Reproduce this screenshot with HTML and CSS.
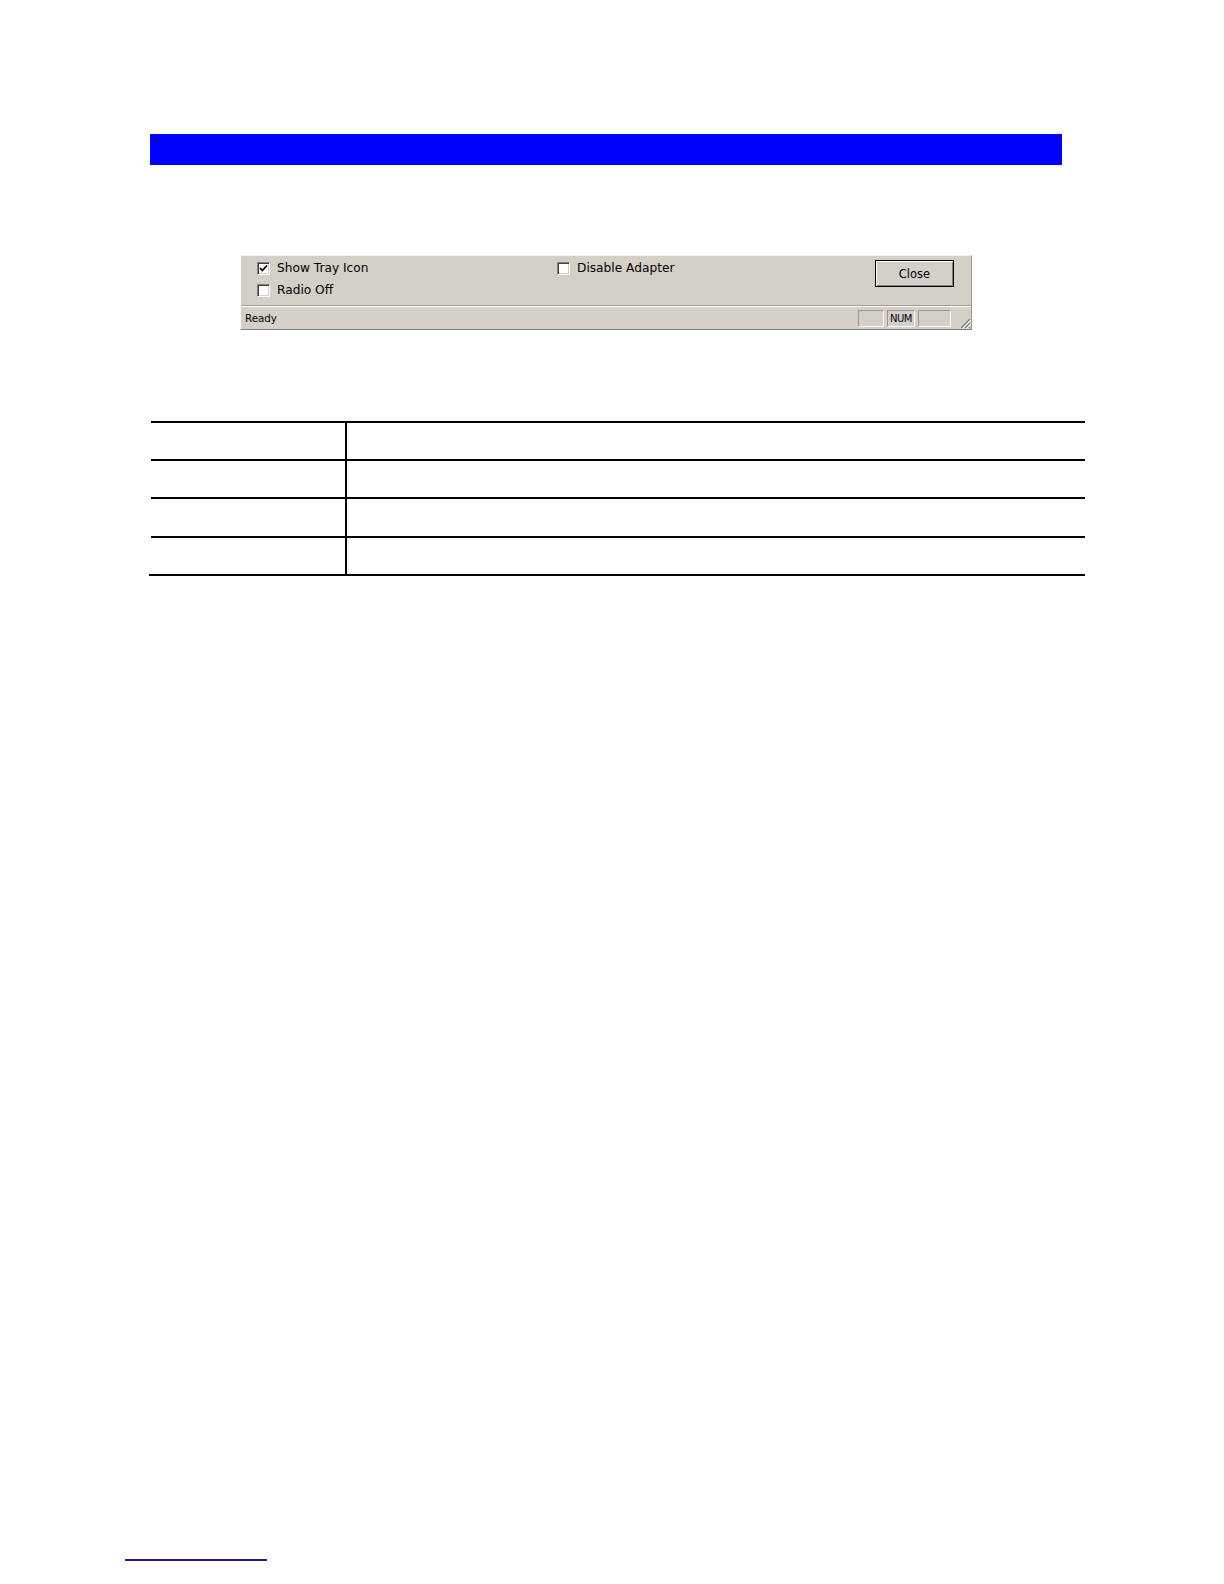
FILE: index.html
```html
<!DOCTYPE html>
<html>
<head>
<meta charset="utf-8">
<link rel="stylesheet" href="styles.css">
</head>
<body>
<div class="page">
  <div class="banner"></div>

  <div class="dialog">
    <div class="opts">
      <div class="col col1">
        <label class="chk"><span class="box"><svg width="9" height="9" viewBox="0 0 9 9"><polyline points="1,4 3.3,6.5 8,1.5" fill="none" stroke="#000" stroke-width="1.8"/></svg></span>Show Tray Icon</label>
        <label class="chk"><span class="box"></span>Radio Off</label>
      </div>
      <div class="col col2">
        <label class="chk"><span class="box"></span>Disable Adapter</label>
      </div>
      <div class="col col3">
        <button class="btn">Close</button>
      </div>
    </div>
    <div class="status">
      <span class="ready">Ready</span>
      <span class="pane p1"></span>
      <span class="pane p2">NUM</span>
      <span class="pane p3"></span>
      <span class="grip"><svg width="12" height="12" viewBox="0 0 12 12"><path d="M11 2 L2 11 M11 6 L6 11 M11 10 L10 11" stroke="#808080" stroke-width="1.2" fill="none"/><path d="M12 3 L3 12 M12 7 L7 12" stroke="#fff" stroke-width="1" fill="none"/></svg></span>
    </div>
  </div>

  <div class="table">
    <div class="row"><div class="c1"></div><div class="c2"></div></div>
    <div class="row"><div class="c1"></div><div class="c2"></div></div>
    <div class="row"><div class="c1"></div><div class="c2"></div></div>
    <div class="row"><div class="c1"></div><div class="c2"></div></div>
  </div>

  <div class="footer"><span class="link"></span></div>
</div>
</body>
</html>
```

FILE: styles.css
```css
html, body {
  margin: 0;
  padding: 0;
  background: #ffffff;
}

.page {
  width: 1224px;
  height: 1584px;
  padding-top: 134px;
  box-sizing: border-box;
  font-family: "DejaVu Sans", Verdana, sans-serif;
}

.banner {
  margin-left: 150px;
  width: 912px;
  height: 31px;
  background: #0000ff;
}

.dialog {
  margin-top: 90px;
  margin-left: 240px;
  width: 732px;
  height: 75px;
  box-sizing: border-box;
  background: #d4d0c8;
  border-left: 1px solid #ffffff;
  border-top: 1px solid #f2f1ee;
  border-right: 1px solid #9a9892;
  border-bottom: 1px solid #808080;
  display: flex;
  flex-direction: column;
  color: #000;
}

.opts {
  height: 50px;
  display: flex;
  padding: 6px 0 0 16px;
  box-sizing: border-box;
  border-bottom: 1px solid #a09c94;
  font-size: 12.2px;
}

.col {
  display: flex;
  flex-direction: column;
  gap: 9px;
}

.col1 { width: 300px; }
.col2 { width: 318px; }

.chk {
  display: flex;
  align-items: center;
  height: 13px;
  gap: 7px;
  line-height: 13px;
}

.box {
  width: 13px;
  height: 13px;
  box-sizing: border-box;
  background: #ffffff;
  border-top: 1px solid #808080;
  border-left: 1px solid #808080;
  border-right: 1px solid #ffffff;
  border-bottom: 1px solid #ffffff;
  box-shadow: inset 1px 1px 0 #404040, inset -1px -1px 0 #d4d0c8;
  display: flex;
  align-items: center;
  justify-content: center;
}

.btn {
  margin-top: -2px;
  width: 79px;
  height: 27px;
  box-sizing: border-box;
  background: #d4d0c8;
  border: 1px solid #000000;
  box-shadow: inset 1px 1px 0 #ffffff, inset -1px -1px 0 #808080;
  font-family: "DejaVu Sans", Verdana, sans-serif;
  font-size: 11.5px;
  color: #000;
  padding: 0;
}

.status {
  flex: 1;
  display: flex;
  align-items: center;
  border-top: 1px solid #ffffff;
  padding: 0 0 0 4px;
  font-size: 10.3px;
}

.ready {
  flex: 1;
}

.pane {
  height: 17px;
  box-sizing: border-box;
  border-top: 1px solid #9a9892;
  border-left: 1px solid #9a9892;
  border-right: 1px solid #ffffff;
  border-bottom: 1px solid #ffffff;
  margin-right: 3px;
  font-size: 10px;
  line-height: 15px;
  text-align: center;
}

.p1 { width: 26px; }
.p2 { width: 28px; letter-spacing: -0.5px; }
.p3 { width: 33px; }

.grip {
  width: 16px;
  height: 21px;
  display: flex;
  align-items: flex-end;
  justify-content: flex-end;
  margin-left: 1px;
}

.table {
  margin-top: 91px;
  margin-left: 151px;
  width: 934px;
  border-top: 2px solid #000;
}

.row {
  display: flex;
  height: 38px;
  box-sizing: border-box;
  border-bottom: 2px solid #000;
}

.row:nth-child(3) {
  height: 39px;
}

.row:last-child {
  height: 38px;
  margin-left: -2px;
}

.c1 {
  width: 194px;
  border-right: 2px solid #000;
}

.row:last-child .c1 {
  width: 196px;
}

.c2 {
  flex: 1;
}

.footer {
  margin-top: 983px;
  margin-left: 125px;
}

.link {
  display: block;
  width: 142px;
  height: 2px;
  background: #1c1c96;
}
```
